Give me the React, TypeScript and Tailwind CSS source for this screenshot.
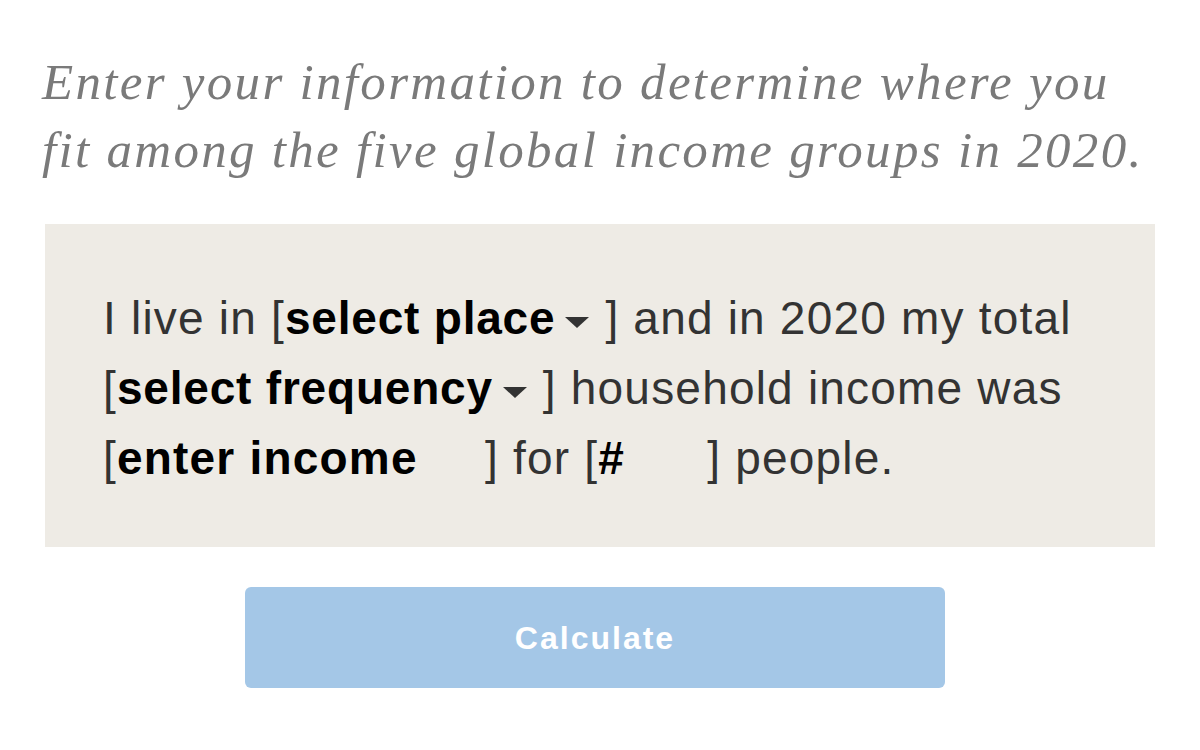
import React from 'react';

const Caret = () => (
  <svg width="28" height="14" viewBox="0 0 28 14" className="inline-block ml-[8px] mr-[14px] align-middle">
    <path d="M2 2 L26 2 L14 13 Z" fill="#333" />
  </svg>
);

export default function App() {
  return (
    <div className="w-[1200px] h-[750px] bg-white pt-[48px]">
      <h1
        className="px-[42px] text-[51px] leading-[68px] italic text-[#7a7a7a] tracking-[2.3px]"
        style={{ fontFamily: '"Liberation Serif", serif' }}
      >
        Enter your information to determine where you
        <br />
        fit among the five global income groups in 2020.
      </h1>

      <div
        className="mx-[45px] mt-[40px] h-[323px] bg-[#eeebe5] pl-[58px] pt-[59px] text-[46px] leading-[70px] text-[#333] tracking-[1.2px]"
        style={{ fontFamily: '"Liberation Sans", Arial, sans-serif' }}
      >
        <p>
          I live in [<b className="text-black tracking-[0.8px]">select place</b>
          <Caret />] and in 2020 my total
        </p>
        <p>
          [<b className="text-black tracking-[0.8px]">select frequency</b>
          <Caret />] household income was
        </p>
        <p>
          [<b className="text-black inline-block w-[368px] tracking-[1.2px]">enter income</b>] for [
          <b className="text-black inline-block w-[109px]">#</b>] people.
        </p>
      </div>

      <div className="flex mt-[40px] pl-[245px]">
        <button
          className="w-[700px] h-[101px] rounded-[6px] bg-[#a4c7e7] text-white text-[32px] font-bold tracking-[2px]"
          style={{ fontFamily: '"Liberation Sans", Arial, sans-serif' }}
        >
          Calculate
        </button>
      </div>
    </div>
  );
}
